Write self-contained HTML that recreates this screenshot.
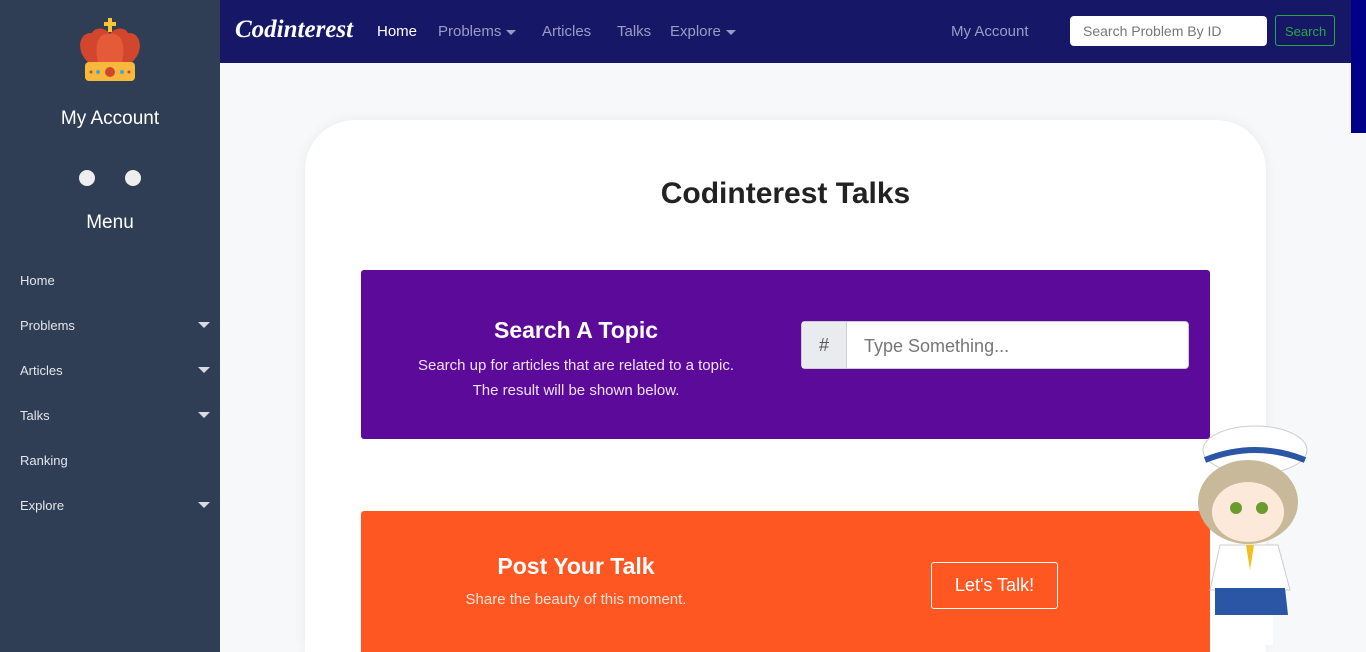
<!DOCTYPE html>
<html style="width:1366px;height:652px;overflow:hidden"><head><meta charset="utf-8"><style>
*{box-sizing:border-box;margin:0;padding:0}
body{width:1366px;height:652px;overflow:hidden;background:#f7f8f9;font-family:"Liberation Sans",sans-serif;position:relative}
.side{position:absolute;left:0;top:0;width:220px;height:652px;background:#2f3e55;color:#fff}
.side .t{position:absolute;width:220px;text-align:center;font-size:19px}
.side .dot{position:absolute;top:170px;width:16px;height:16px;border-radius:50%;background:#eee}
.side .it{position:absolute;left:20px;font-size:13px;color:#e4e7ec}
.side .car{position:absolute;left:198px;width:0;height:0;border-left:6px solid transparent;border-right:6px solid transparent;border-top:6px solid #d8dce2}
.nav{position:absolute;left:220px;top:0;width:1131px;height:63px;background:#161867}
.nav span{position:absolute;top:23px;font-size:15px;color:#9a9cc4}
.sb{position:absolute;left:1351px;top:0;width:15px;height:133px;background:#000088}
.card{position:absolute;left:305px;top:120px;width:961px;height:532px;background:#fff;border-radius:50px 50px 0 0;box-shadow:0 0 12px rgba(0,0,0,.06);overflow:hidden}
.car2{display:inline-block;border-left:5px solid transparent;border-right:5px solid transparent;border-top:5px solid #9a9cc4;vertical-align:middle;margin-left:5px}
</style></head><body>
<div class="side">
<svg style="position:absolute;left:76px;top:16px" width="68" height="68" viewBox="0 0 68 68">
<rect x="32" y="2" width="4" height="14" fill="#fbc531"/><rect x="28" y="6" width="12" height="4" fill="#fbc531"/>
<path d="M12 46 C0 36 2 16 16 17 C20 10 30 12 34 18 C38 12 48 10 52 17 C66 16 68 36 56 46Z" fill="#d2462e"/>
<path d="M22 46 C18 30 22 16 34 18 C46 16 50 30 46 46Z" fill="#e55a39"/>
<rect x="9" y="46" width="50" height="19" rx="4" fill="#f6b93b"/>
<circle cx="34" cy="56" r="5" fill="#d2462e"/><circle cx="22" cy="56" r="2" fill="#4aa3df"/><circle cx="46" cy="56" r="2" fill="#4aa3df"/>
<circle cx="15" cy="56" r="1.5" fill="#d2462e"/><circle cx="53" cy="56" r="1.5" fill="#d2462e"/></svg>
<div class="t" style="top:108px">My Account</div>
<div class="dot" style="left:79px"></div><div class="dot" style="left:125px"></div>
<div class="t" style="top:212px">Menu</div>
<div class="it" style="top:273px">Home</div>
<div class="it" style="top:318px">Problems</div><div class="car" style="top:322px"></div>
<div class="it" style="top:363px">Articles</div><div class="car" style="top:367px"></div>
<div class="it" style="top:408px">Talks</div><div class="car" style="top:412px"></div>
<div class="it" style="top:453px">Ranking</div>
<div class="it" style="top:498px">Explore</div><div class="car" style="top:502px"></div>
</div>
<div class="nav">
<span style="left:15px;top:16px;font-family:'Liberation Serif',serif;font-style:italic;font-weight:bold;font-size:25px;color:#fff">Codinterest</span>
<span style="left:157px;color:#fff">Home</span>
<span style="left:218px">Problems<i class="car2"></i></span>
<span style="left:322px">Articles</span>
<span style="left:397px">Talks</span>
<span style="left:450px">Explore<i class="car2"></i></span>
<span style="left:731px">My Account</span>
<div style="position:absolute;left:850px;top:16px;width:197px;height:30px;background:#fff;border-radius:4px;color:#777;font-size:14px;padding:7px 13px">Search Problem By ID</div>
<div style="position:absolute;left:1055px;top:15px;width:60px;height:31px;border:1px solid #28a745;border-radius:3px;color:#28a745;font-size:13px;padding:8px 9px">Search</div>
</div>
<div class="sb"></div>
<div class="card">
<div style="position:absolute;top:57px;width:961px;text-align:center;font-size:30px;font-weight:bold;color:#222">Codinterest Talks</div>
<div style="position:absolute;left:56px;top:150px;width:849px;height:169px;background:#5c0a99;border-radius:3px;color:#fff">
<div style="position:absolute;left:0;width:430px;top:47px;text-align:center;font-size:23px;font-weight:bold">Search A Topic</div>
<div style="position:absolute;left:0;width:430px;top:83px;text-align:center;font-size:15px;line-height:25px;color:#f0e3ff">Search up for articles that are related to a topic.<br>The result will be shown below.</div>
<div style="position:absolute;left:440px;top:51px;width:388px;height:48px;background:#fff;border-radius:4px;border:1px solid #ccc">
<div style="position:absolute;left:0;top:0;width:45px;height:46px;background:#e9ecef;border-right:1px solid #ccc;color:#555;font-size:18px;text-align:center;line-height:46px">#</div>
<div style="position:absolute;left:62px;top:14px;color:#777;font-size:18px">Type Something...</div></div>
</div>
<div style="position:absolute;left:56px;top:391px;width:849px;height:141px;background:#fe5722;border-radius:3px 3px 0 0;color:#fff">
<div style="position:absolute;left:0;width:430px;top:42px;text-align:center;font-size:23px;font-weight:bold">Post Your Talk</div>
<div style="position:absolute;left:0;width:430px;top:80px;text-align:center;font-size:15px;color:#ffe3d8">Share the beauty of this moment.</div>
<div style="position:absolute;left:570px;top:51px;width:127px;height:47px;border:1px solid #fff;border-radius:3px;font-size:18px;text-align:center;line-height:45px">Let's Talk!</div>
</div></div>
<svg style="position:absolute;left:1190px;top:420px" width="130" height="232" viewBox="0 0 130 232">
<ellipse cx="65" cy="30" rx="52" ry="24" fill="#fff" stroke="#ccc"/><path d="M15 40 Q65 20 115 40" stroke="#2b55a5" stroke-width="6" fill="none"/>
<ellipse cx="58" cy="82" rx="50" ry="42" fill="#c8b99a"/><ellipse cx="58" cy="92" rx="36" ry="30" fill="#fde9d9"/>
<circle cx="46" cy="88" r="6" fill="#6a9b2d"/><circle cx="72" cy="88" r="6" fill="#6a9b2d"/>
<path d="M30 125 L88 125 L100 170 L20 170Z" fill="#fff" stroke="#ccc"/><path d="M56 125 L60 150 L64 125Z" fill="#f2c01c"/>
<path d="M25 168 L95 168 L98 195 L25 195Z" fill="#2b55a5"/>
<rect x="33" y="195" width="10" height="30" fill="#fff"/><rect x="73" y="195" width="10" height="30" fill="#fff"/>
</svg>
</body></html>
